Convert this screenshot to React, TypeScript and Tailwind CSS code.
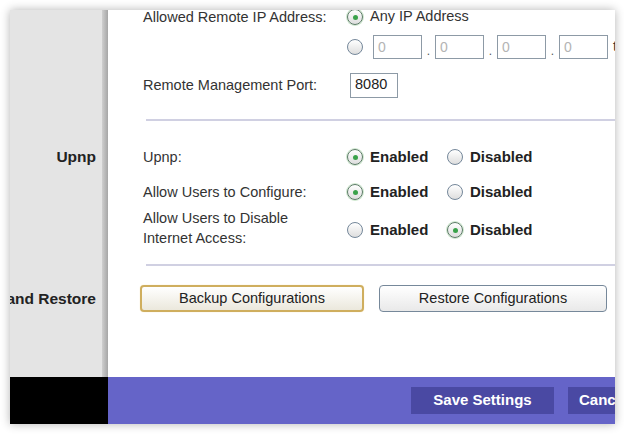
import { FC, ReactNode } from "react"

const font = { fontFamily: '"Liberation Sans", Arial, sans-serif' }

const Radio: FC<{ on?: boolean }> = ({ on }) => (
  <span
    className={
      "flex h-[16px] w-[16px] shrink-0 items-center justify-center rounded-full border-[1.5px] bg-linear-to-b from-white to-[#dedede] " +
      (on ? "border-[#5b7a66] shadow-[0_0_0_1px_#cfe8cf]" : "border-[#74879a]")
    }
  >
    {on && <span className="h-[5px] w-[5px] rounded-full bg-[#3aa24a]" />}
  </span>
)

const Choice: FC<{ on?: boolean; label: string; bold?: boolean; w?: string }> = ({ on, label, bold, w }) => (
  <div className={"flex items-center gap-[7px] " + (w ?? "")}>
    <Radio on={on} />
    <span className={bold ? "text-[15px] font-bold text-[#222]" : "text-[14.5px] text-[#333]"}>{label}</span>
  </div>
)

const Row: FC<{ h: string; side?: string; children?: ReactNode; className?: string }> = ({ h, side, children, className }) => (
  <div className={"flex " + h}>
    <div className="flex w-[98px] shrink-0">
      <div className="flex w-[92px] items-center justify-end overflow-hidden bg-[#e4e4e4] pr-[6px]">
        {side && <span className="whitespace-nowrap text-[15.5px] font-bold text-[#222]">{side}</span>}
      </div>
      <div className="w-[6px] bg-linear-to-r from-[#cfcfcf] to-[#a6a6a6]" />
    </div>
    <div className={"flex min-w-0 flex-1 pl-[35px] " + (className ?? "items-center")}>{children}</div>
  </div>
)

const Label: FC<{ children: ReactNode }> = ({ children }) => (
  <div className="w-[204px] shrink-0 text-[14.5px] leading-[20px] text-[#333]">{children}</div>
)

const IpBox: FC = () => (
  <div className="flex h-[24px] w-[49px] shrink-0 items-center border border-[#8d9aa6] bg-white pl-[4px] text-[14px] text-[#b4b4b4]">0</div>
)

const Dot: FC = () => <span className="w-[13px] shrink-0 pt-[8px] text-center text-[12px] text-[#555]">.</span>

export default function App() {
  return (
    <div className="h-[441px] w-[624px] overflow-hidden bg-white pt-[10px] pl-[10px]" style={font}>
      <div className="flex h-[414px] w-[605px] flex-col overflow-hidden bg-white shadow-[0_0_9px_rgba(0,0,0,0.3)]">
        <div className="flex h-[367px] flex-col">
          <Row h="h-[14px]">
            <Label>Allowed Remote IP Address:</Label>
            <Choice on label="Any IP Address" />
          </Row>
          <Row h="h-[46px]">
            <div className="w-[204px] shrink-0" />
            <Radio />
            <div className="ml-[10px] flex items-center whitespace-nowrap">
              <IpBox />
              <Dot />
              <IpBox />
              <Dot />
              <IpBox />
              <Dot />
              <IpBox />
              <span className="ml-[5px] text-[14.5px] text-[#333]">to</span>
            </div>
          </Row>
          <Row h="h-[30px]">
            <Label>Remote Management Port:</Label>
            <div className="ml-[3px] flex h-[25px] w-[48px] items-center border border-[#8d9aa6] pl-[4px] text-[14.5px] text-[#222]">8080</div>
          </Row>
          <Row h="h-[40px]" className="items-start">
            <div className="mt-[19px] ml-[3px] h-[2px] flex-1 bg-[#d0d0e2]" />
          </Row>
          <Row h="h-[34px]" side="Upnp">
            <Label>Upnp:</Label>
            <Choice on bold label="Enabled" w="w-[100px]" />
            <Choice bold label="Disabled" />
          </Row>
          <Row h="h-[36px]">
            <Label>Allow Users to Configure:</Label>
            <Choice on bold label="Enabled" w="w-[100px]" />
            <Choice bold label="Disabled" />
          </Row>
          <Row h="h-[36px]">
            <Label>
              Allow Users to Disable
              <br />
              Internet Access:
            </Label>
            <div className="mt-[4px] flex items-center">
              <Choice bold label="Enabled" w="w-[100px]" />
              <Choice on bold label="Disabled" />
            </div>
          </Row>
          <Row h="h-[39px]" className="items-start">
            <div className="mt-[18px] ml-[3px] h-[2px] flex-1 bg-[#d0d0e2]" />
          </Row>
          <Row h="h-[27px]" side="Backup and Restore">
            <div className="-ml-[3px] flex gap-[15px] whitespace-nowrap">
              <button className="h-[27px] w-[224px] shrink-0 rounded-[4px] border-2 border-[#cfae5e] bg-linear-to-b from-white to-[#ebe8dc] text-[14.5px] text-[#222] shadow-[0_0_1px_#f0d890]">
                Backup Configurations
              </button>
              <button className="h-[27px] w-[228px] shrink-0 rounded-[4px] border-[1.5px] border-[#76889a] bg-linear-to-b from-white to-[#e9e9e9] text-[14.5px] text-[#222]">
                Restore Configurations
              </button>
            </div>
          </Row>
          <Row h="flex-1" />
        </div>
        <div className="flex h-[47px]">
          <div className="w-[98px] shrink-0 bg-black" />
          <div className="flex flex-1 items-start gap-[14px] whitespace-nowrap bg-[#6564c8] pt-[10px] pl-[303px]">
            <button className="h-[27px] w-[143px] shrink-0 bg-[#4a49a3] text-[15px] font-bold text-white">Save Settings</button>
            <button className="h-[27px] w-[110px] shrink-0 bg-[#4a49a3] pl-[11px] text-left text-[15px] font-bold text-white">Cancel Changes</button>
          </div>
        </div>
      </div>
    </div>
  )
}
